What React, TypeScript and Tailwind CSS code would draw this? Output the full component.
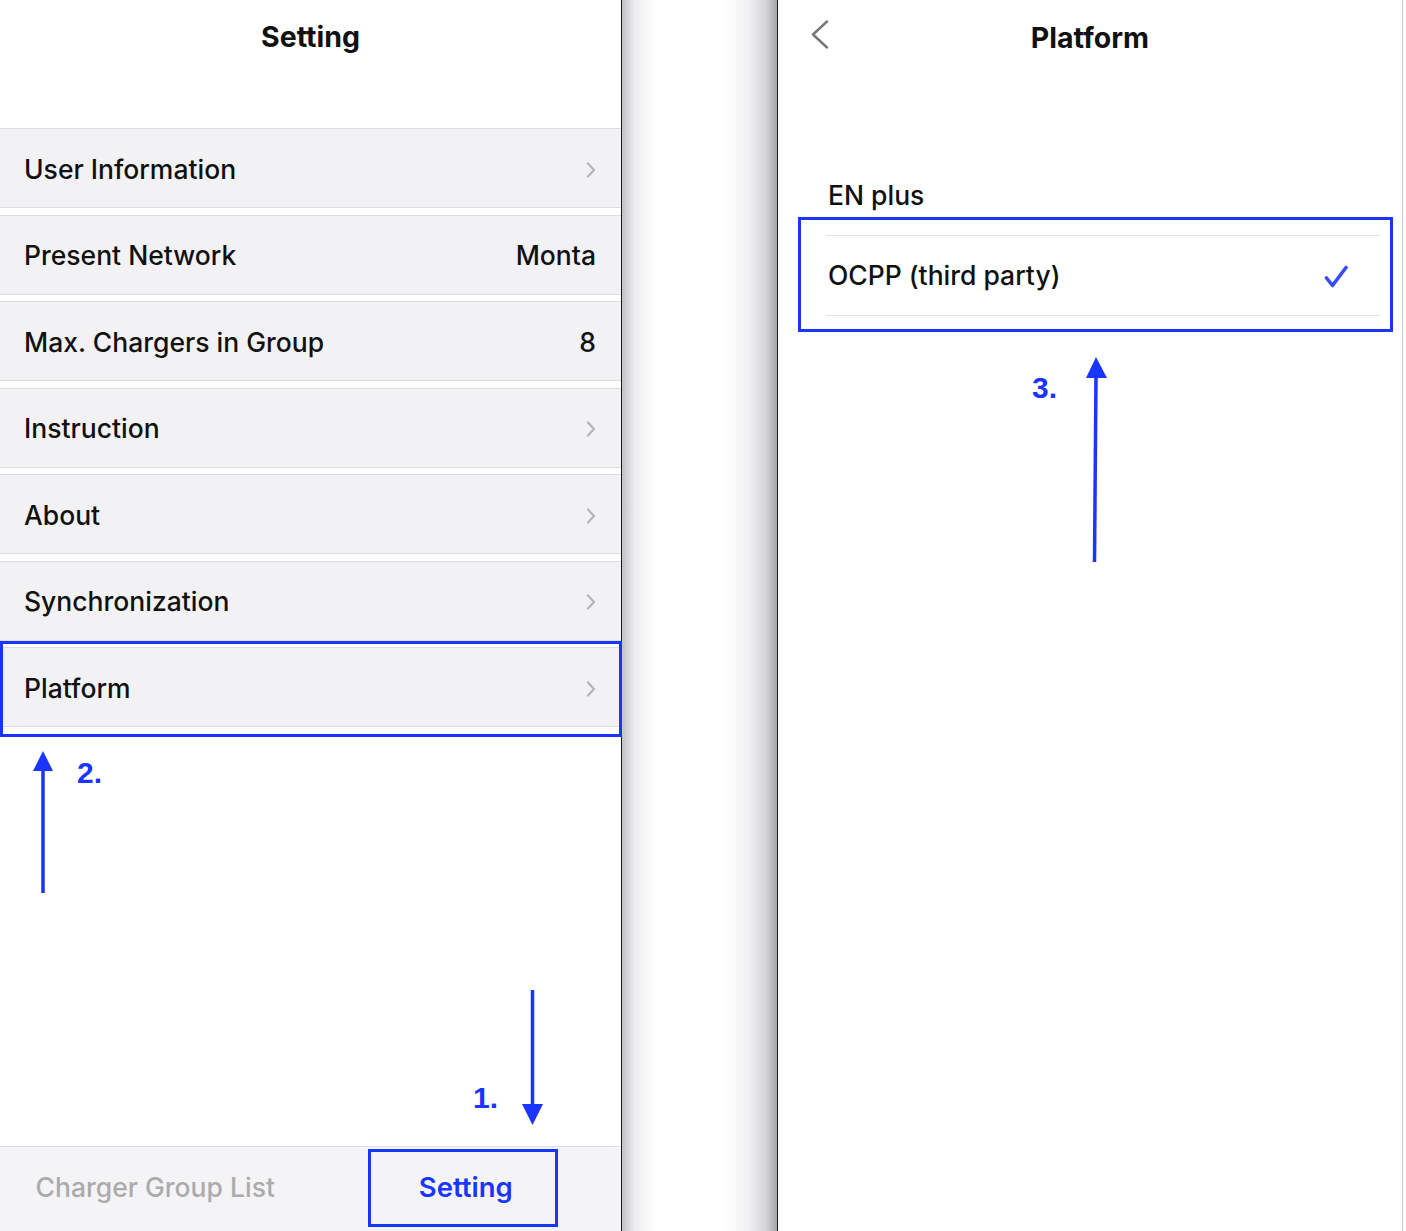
import React from 'react';

const rows: { label: string; value?: string; chevron?: boolean }[] = [
  { label: 'User Information', chevron: true },
  { label: 'Present Network', value: 'Monta' },
  { label: 'Max. Chargers in Group', value: '8' },
  { label: 'Instruction', chevron: true },
  { label: 'About', chevron: true },
  { label: 'Synchronization', chevron: true },
  { label: 'Platform', chevron: true },
];

const Chevron = () => (
  <svg width="10" height="16" viewBox="0 0 10 16" fill="none">
    <path d="M2 1.5 8 8l-6 6.5" stroke="#b5b5b9" strokeWidth="2.2" strokeLinecap="round" strokeLinejoin="round" />
  </svg>
);

const SettingsPanel = () => (
  <div className="flex w-[621px] shrink-0 flex-col bg-white">
    <header className="flex h-[128px] justify-center pt-[19px]">
      <h1 className="text-[28.5px] font-bold leading-[36px] text-[#111]">Setting</h1>
    </header>

    <div className="flex flex-col gap-[6.5px]">
      {rows.map((row) => (
        <div
          key={row.label}
          className="flex h-[80px] items-center justify-between border-y border-[#dddde0] bg-[#f2f2f4] pl-[24px] pr-[25px] pt-[3px]"
        >
          <span className="text-[26.5px] font-medium text-[#111]">{row.label}</span>
          {row.value && <span className="text-[26.5px] font-medium text-[#111]">{row.value}</span>}
          {row.chevron && <Chevron />}
        </div>
      ))}
    </div>

    <div className="flex-1" />

    {/* Tab bar */}
    <nav className="grid h-[85px] grid-cols-2 border-t border-[#e0e0e3] bg-[#f4f4f6]">
      <div className="flex items-center justify-center pb-[3px] text-[26.5px] font-medium text-[#ababae]">Charger Group List</div>
      <div className="flex items-center justify-center pb-[3px] text-[27.5px] font-semibold text-[#1a35ff]">Setting</div>
    </nav>
  </div>
);

const PlatformPanel = () => (
  <div className="flex w-[625px] shrink-0 flex-col border-r border-[#c9c9cc] bg-white">
    <header className="relative flex h-[155px] justify-center pt-[20px]">
      <svg className="absolute left-[32px] top-[20px]" width="20" height="30" viewBox="0 0 20 30" fill="none">
        <path d="M17 1.5 3 14.5l14 13" stroke="#77777a" strokeWidth="2.4" strokeLinecap="round" strokeLinejoin="round" />
      </svg>
      <h1 className="text-[28.5px] font-bold leading-[36px] text-[#111]">Platform</h1>
    </header>

    <div className="flex h-[80px] items-center pl-[50px] pt-[1px]">
      <span className="text-[26.5px] font-medium text-[#111]">EN plus</span>
    </div>
    <div className="ml-[48px] mr-[22px] flex h-[81px] items-center justify-between border-y border-[#e3e3e5] pl-[2px] pr-[32px] pt-[1px]">
      <span className="text-[26.5px] font-medium text-[#111]">OCPP (third party)</span>
      <svg width="24" height="23" viewBox="0 0 24 23" fill="none">
        <path d="M2.5 13 8.5 20.5 22 2.5" stroke="#3a4cff" strokeWidth="3.6" strokeLinecap="round" strokeLinejoin="round" />
      </svg>
    </div>
  </div>
);

export default function App() {
  return (
    <div className="relative flex h-[1231px] w-[1406px] overflow-hidden bg-white font-['Inter','Liberation_Sans',sans-serif]">
      <SettingsPanel />

      <div className="w-[157px] shrink-0 border-x border-[#1c1c1e] bg-[linear-gradient(to_right,#c2c2c6_0%,#ececef_8%,#ffffff_22%,#ffffff_66%,#f0f0f2_82%,#d4d4d8_93%,#a6a6aa_100%)]" />

      <PlatformPanel />

      {/* Annotation boxes */}
      <div className="pointer-events-none absolute left-0 top-[641px] h-[96px] w-[622px] border-[3px] border-[#1a35ff]" />
      <div className="pointer-events-none absolute left-[368px] top-[1149px] h-[78px] w-[190px] border-[3px] border-[#1a35ff]" />
      <div className="pointer-events-none absolute left-[798px] top-[217px] h-[115px] w-[595px] border-[3px] border-[#1a35ff]" />

      {/* Annotation arrows */}
      <svg className="pointer-events-none absolute inset-0" width="1406" height="1231" viewBox="0 0 1406 1231">
        <g stroke="#1a35ff" strokeWidth="3.5" fill="#1a35ff">
          <line x1="43" y1="768" x2="43" y2="893" />
          <line x1="532.5" y1="990" x2="532.5" y2="1106" />
          <line x1="1096" y1="376" x2="1094.5" y2="562" />
        </g>
        <g fill="#1a35ff">
          <polygon points="43,751 33,771 53,771" />
          <polygon points="532.5,1125 522,1104 543,1104" />
          <polygon points="1096,357 1086,378 1107,378" />
        </g>
      </svg>

      <span className="pointer-events-none absolute left-[77px] top-[753px] font-['Liberation_Sans',sans-serif] text-[30px] font-bold leading-[40px] text-[#1a35ff]">2.</span>
      <span className="pointer-events-none absolute left-[473px] top-[1078px] font-['Liberation_Sans',sans-serif] text-[30px] font-bold leading-[40px] text-[#1a35ff]">1.</span>
      <span className="pointer-events-none absolute left-[1032px] top-[368px] font-['Liberation_Sans',sans-serif] text-[30px] font-bold leading-[40px] text-[#1a35ff]">3.</span>
    </div>
  );
}
